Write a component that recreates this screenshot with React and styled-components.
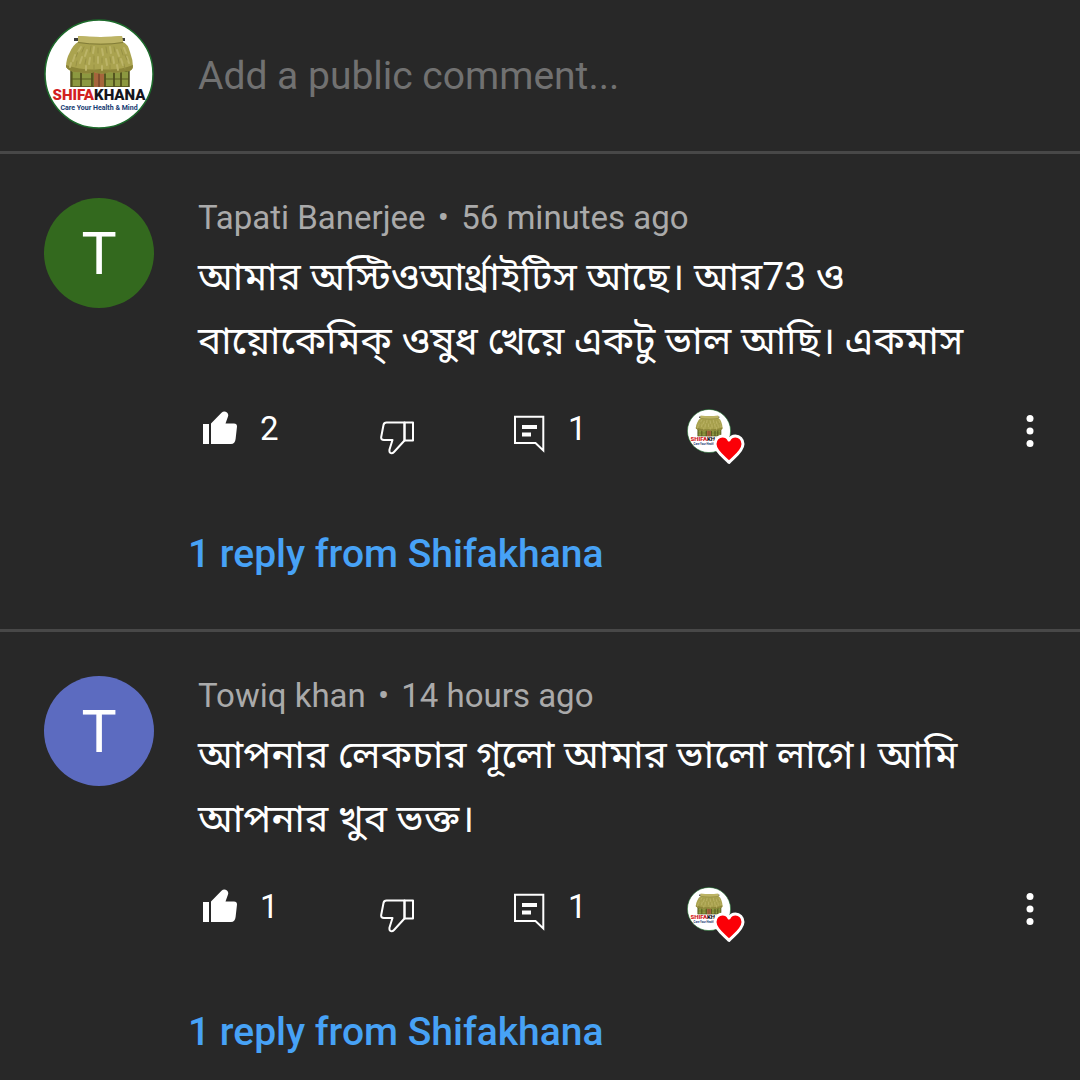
import React from 'react';
import styled, { createGlobalStyle } from 'styled-components';

const colors = {
  background: '#282828',
  divider: '#484848',
  text: '#ffffff',
  muted: '#aaaaaa',
  placeholder: '#717171',
  link: '#47a2f6',
  green: '#33691e',
  indigo: '#5c6bc0',
};

const App = () => {
  return (
    <>
      <GlobalStyle />
      <Page>
        <Composer>
          <Logo size={110} />
          <ComposerInput
            type="text"
            aria-label="Add a public comment"
            placeholder="Add a public comment..."
          />
        </Composer>
        {comments.map((el) => (
          <Comment key={el.author} {...el} />
        ))}
      </Page>
    </>
  );
}

export default App;


const Comment = ({ author, time, color, text, likes, replies }) => {
  return (
    <CommentWrapper>
      <Avatar $color={color}>{author[0]}</Avatar>
      <Content>
        <Meta>{author} <Dot>•</Dot> {time}</Meta>
        <Text lang="bn">{text}</Text>
        <Actions>
          <Action aria-label="Like">
            <LikeIcon />
            <span>{likes}</span>
          </Action>
          <Action aria-label="Dislike">
            <DislikeIcon />
          </Action>
          <Action aria-label="Reply">
            <ReplyIcon />
            <span>{replies}</span>
          </Action>
          <Hearted>
            <Logo size={44} />
            <Badge viewBox="0 0 32 31" aria-hidden="true">
              <path
                d="M16 28.500C12 24 2 17.500 2 10C2 5.500 5.500 2 9.500 2C12.500 2 14.800 3.500 16 6C17.200 3.500 19.500 2 22.500 2C26.500 2 30 5.500 30 10C30 17.500 20 24 16 28.500Z"
                fill="#fb0007"
                stroke="#ffffff"
                strokeWidth="3"
                strokeLinejoin="round"
              />
            </Badge>
          </Hearted>
          <Action aria-label="More">
            <MoreIcon />
          </Action>
        </Actions>
        <Replies href="#replies">{replies} reply from Shifakhana</Replies>
      </Content>
    </CommentWrapper>
  );
}

const Logo = ({ size }) => (
  <LogoSvg $size={size} viewBox="0 0 110 110" role="img" aria-label="Shifakhana">
    <circle cx="55" cy="55" r="54" fill="#ffffff" stroke="#1d6b2b" strokeWidth="1.500" />
    <rect x="27" y="48" width="58" height="20" fill="#6b7228" />
    <path d="M29 53h7v14h-7zM38 53h9v14h-9zM62 53h7v14h-7zM71 53h5v14h-5zM78 53h6v14h-6z" fill="#8c9840" />
    <path d="M27 60h22M61 60h24M27 67.500h58" stroke="#5a5c22" strokeWidth="1" />
    <path d="M27 50v18M37 50v18M48 50v18M61 50v18M70 50v18M77 50v18M85 50v18" stroke="#4f4d1e" strokeWidth="1.500" />
    <rect x="50" y="53" width="10" height="15" fill="#a5653c" />
    <path d="M55 53v15" stroke="#5c3520" strokeWidth="1" />
    <path d="M30 20.500h51" stroke="#3b3d3c" strokeWidth="3" />
    <path
      d="M34 17Q57 19 78 17L79 23Q84 25 86 33Q89 41 89 48Q88 53 82 52Q74 55 66 53Q58 56 50 53Q42 56 35 53Q26 54 22 48Q22 40 26 33Q29 26 34 23Z"
      fill="#aaa34f"
    />
    <path d="M22 46Q40 52 56 50Q74 52 89 46Q89 53 82 52Q74 55 66 53Q58 56 50 53Q42 56 35 53Q26 54 22 48Z" fill="#8c8538" />
    <path d="M34 17Q57 19 78 17L79 23Q57 26 34 23Z" fill="#bdb465" />
    <path d="M34 23.500Q57 27 79 23.500" fill="none" stroke="#827c38" strokeWidth="1" />
    <path
      d="M37 28l-3 5M43 31l-2 6M50 28l-1 6M58 30l1 6M66 28l1 6M73 31l2 6M80 29l2 5M31 36l-2 6M38 38l-2 6M46 39l-1 6M54 38v6M62 40l1 6M69 38l1 6M77 40l2 6M83 38l2 6M27 44l-1 4M42 47v4M58 47v4M73 46l1 5"
      stroke="#bcb468"
      strokeWidth="2"
      strokeLinecap="round"
    />
    <path
      d="M40 28l-2 5M47 27l-1 6M54 29v5M62 28l1 6M70 28l1 5M77 30l2 6M34 33l-2 5M42 40l-1 5M50 37v6M58 39v5M66 38l1 6M74 39l1 5M81 36l2 5M33 42l-1 5M50 46v5M66 46v5M80 45l1 5"
      stroke="#989145"
      strokeWidth="1"
      strokeLinecap="round"
    />
    <LogoName x="55" y="81" textAnchor="middle">
      <tspan fill="#d2211f">SHIFA</tspan>
      <tspan fill="#15151d">KHANA</tspan>
    </LogoName>
    <LogoTagline x="55" y="91" textAnchor="middle">Care Your Health &amp; Mind</LogoTagline>
  </LogoSvg>
);

const LikeIcon = () => (
  <LikeSvg viewBox="0 0 34 34" aria-hidden="true">
    <path d="M0 13H6V33H0Z" />
    <path d="M8 33V12.500L18.500 1.800Q21 -0.500 24 1.500Q25.800 3 25 5.500L22.500 12.500H31Q34 12.500 34 15.500L32.600 28Q32 33 28 33Z" />
  </LikeSvg>
);

const DislikeIcon = () => (
  <DislikeSvg viewBox="0 0 34 34" aria-hidden="true">
    <path d="M24.500 1.500H6.500Q4 1.500 3.500 4L1.200 16Q0.800 19 4 19H12.500L9.500 28.500Q9 32 11.500 32.300Q12.800 32.300 14 31L24.500 19.500Z" />
    <path d="M24.500 1.500H33V19.500H24.500Z" />
  </DislikeSvg>
);

const ReplyIcon = () => (
  <ReplySvg viewBox="0 0 31 38" aria-hidden="true">
    <path d="M1 1.700H29.300V35.500L21.500 28H1Z" fill="none" stroke="currentColor" strokeWidth="2" />
    <path d="M8 10H23V14H8ZM8 17.500H17V21.500H8Z" fill="currentColor" />
  </ReplySvg>
);

const MoreIcon = () => (
  <MoreSvg viewBox="0 0 12 36" aria-hidden="true">
    <circle cx="6" cy="5.500" r="3.500" />
    <circle cx="6" cy="18" r="3.500" />
    <circle cx="6" cy="30.500" r="3.500" />
  </MoreSvg>
);


const GlobalStyle = createGlobalStyle`
  * {
    box-sizing: border-box;
  }

  body {
    margin: 0;
    background-color: ${colors.background};
    color: ${colors.text};
    font-family: Roboto, "Noto Sans Bengali", "Noto Sans", sans-serif;
  }
`;

const Page = styled.main`
  min-height: 100vh;
`;

const Composer = styled.header`
  display: flex;
  align-items: center;
  gap: 44px;
  padding: 19px 44px 22px;
  border-bottom: 3px solid ${colors.divider};
`;

const ComposerInput = styled.input`
  flex: 1;
  min-width: 0;
  padding: 4px 0 0;
  border: 0;
  outline: 0;
  background: none;
  color: ${colors.text};
  font-family: inherit;
  font-size: 39px;

  &::placeholder {
    color: ${colors.placeholder};
    opacity: 1;
  }
`;

const CommentWrapper = styled.article`
  display: flex;
  align-items: flex-start;
  gap: 44px;
  padding: 44px 44px 51px;

  &:not(:last-child) {
    border-bottom: 3px solid ${colors.divider};
  }

  &:last-child {
    padding-bottom: 24px;
  }
`;

const Avatar = styled.div`
  display: flex;
  flex-shrink: 0;
  align-items: center;
  justify-content: center;
  width: 110px;
  height: 110px;
  border-radius: 50%;
  background-color: ${({ $color }) => $color};
  font-size: 59px;
`;

const Content = styled.div`
  flex: 1;
  min-width: 0;
`;

const Meta = styled.div`
  color: ${colors.muted};
  font-size: 33px;
  line-height: 40px;
`;

const Dot = styled.span`
  margin: 0 4px;
`;

const Text = styled.p`
  margin: 7px 0 0;
  font-size: 39px;
  line-height: 64px;
`;

const Actions = styled.div`
  display: grid;
  grid-template-columns: 177px 134px 173px 1fr auto;
  align-items: start;
  height: 56px;
  margin-top: 36px;
  padding-left: 5px;
`;

const Action = styled.button`
  display: flex;
  align-items: flex-start;
  gap: 23px;
  padding: 0;
  border: 0;
  background: none;
  color: inherit;
  font-family: inherit;
  font-size: 33px;
  line-height: 40px;
  cursor: pointer;
`;

const LikeSvg = styled.svg`
  width: 34px;
  height: 34px;
  margin-top: 2px;
  fill: currentColor;
`;

const DislikeSvg = styled.svg`
  width: 34px;
  height: 34px;
  margin-top: 12px;
  fill: none;
  stroke: currentColor;
  stroke-width: 2;
  stroke-linejoin: round;
`;

const ReplySvg = styled.svg`
  width: 31px;
  height: 38px;
  margin-top: 6px;
`;

const MoreSvg = styled.svg`
  width: 12px;
  height: 36px;
  margin-top: 4px;
  fill: currentColor;
`;

const Hearted = styled.div`
  position: relative;
  width: 58px;
  height: 56px;
`;

const Badge = styled.svg`
  position: absolute;
  right: 0;
  bottom: 0;
  width: 32px;
  height: 31px;
`;

const Replies = styled.a`
  display: inline-block;
  margin: 65px 0 0 -10px;
  color: ${colors.link};
  font-size: 39px;
  font-weight: 500;
  line-height: 48px;
  text-decoration: none;
`;

const LogoSvg = styled.svg`
  display: block;
  flex-shrink: 0;
  width: ${({ $size }) => $size}px;
  height: ${({ $size }) => $size}px;
`;

const LogoName = styled.text`
  font-family: Roboto, sans-serif;
  font-size: 15px;
  font-weight: 900;
`;

const LogoTagline = styled.text`
  fill: #163a72;
  font-family: Roboto, sans-serif;
  font-size: 7px;
  font-weight: 700;
`;

const comments = [
  {
    author: 'Tapati Banerjee',
    time: '56 minutes ago',
    color: colors.green,
    text: 'আমার অস্টিওআর্থ্রাইটিস আছে। আর73 ও বায়োকেমিক্ ওষুধ খেয়ে একটু ভাল আছি। একমাস',
    likes: 2,
    replies: 1,
  },
  {
    author: 'Towiq khan',
    time: '14 hours ago',
    color: colors.indigo,
    text: 'আপনার লেকচার গূলো আমার ভালো লাগে। আমি আপনার খুব ভক্ত।',
    likes: 1,
    replies: 1,
  },
];
